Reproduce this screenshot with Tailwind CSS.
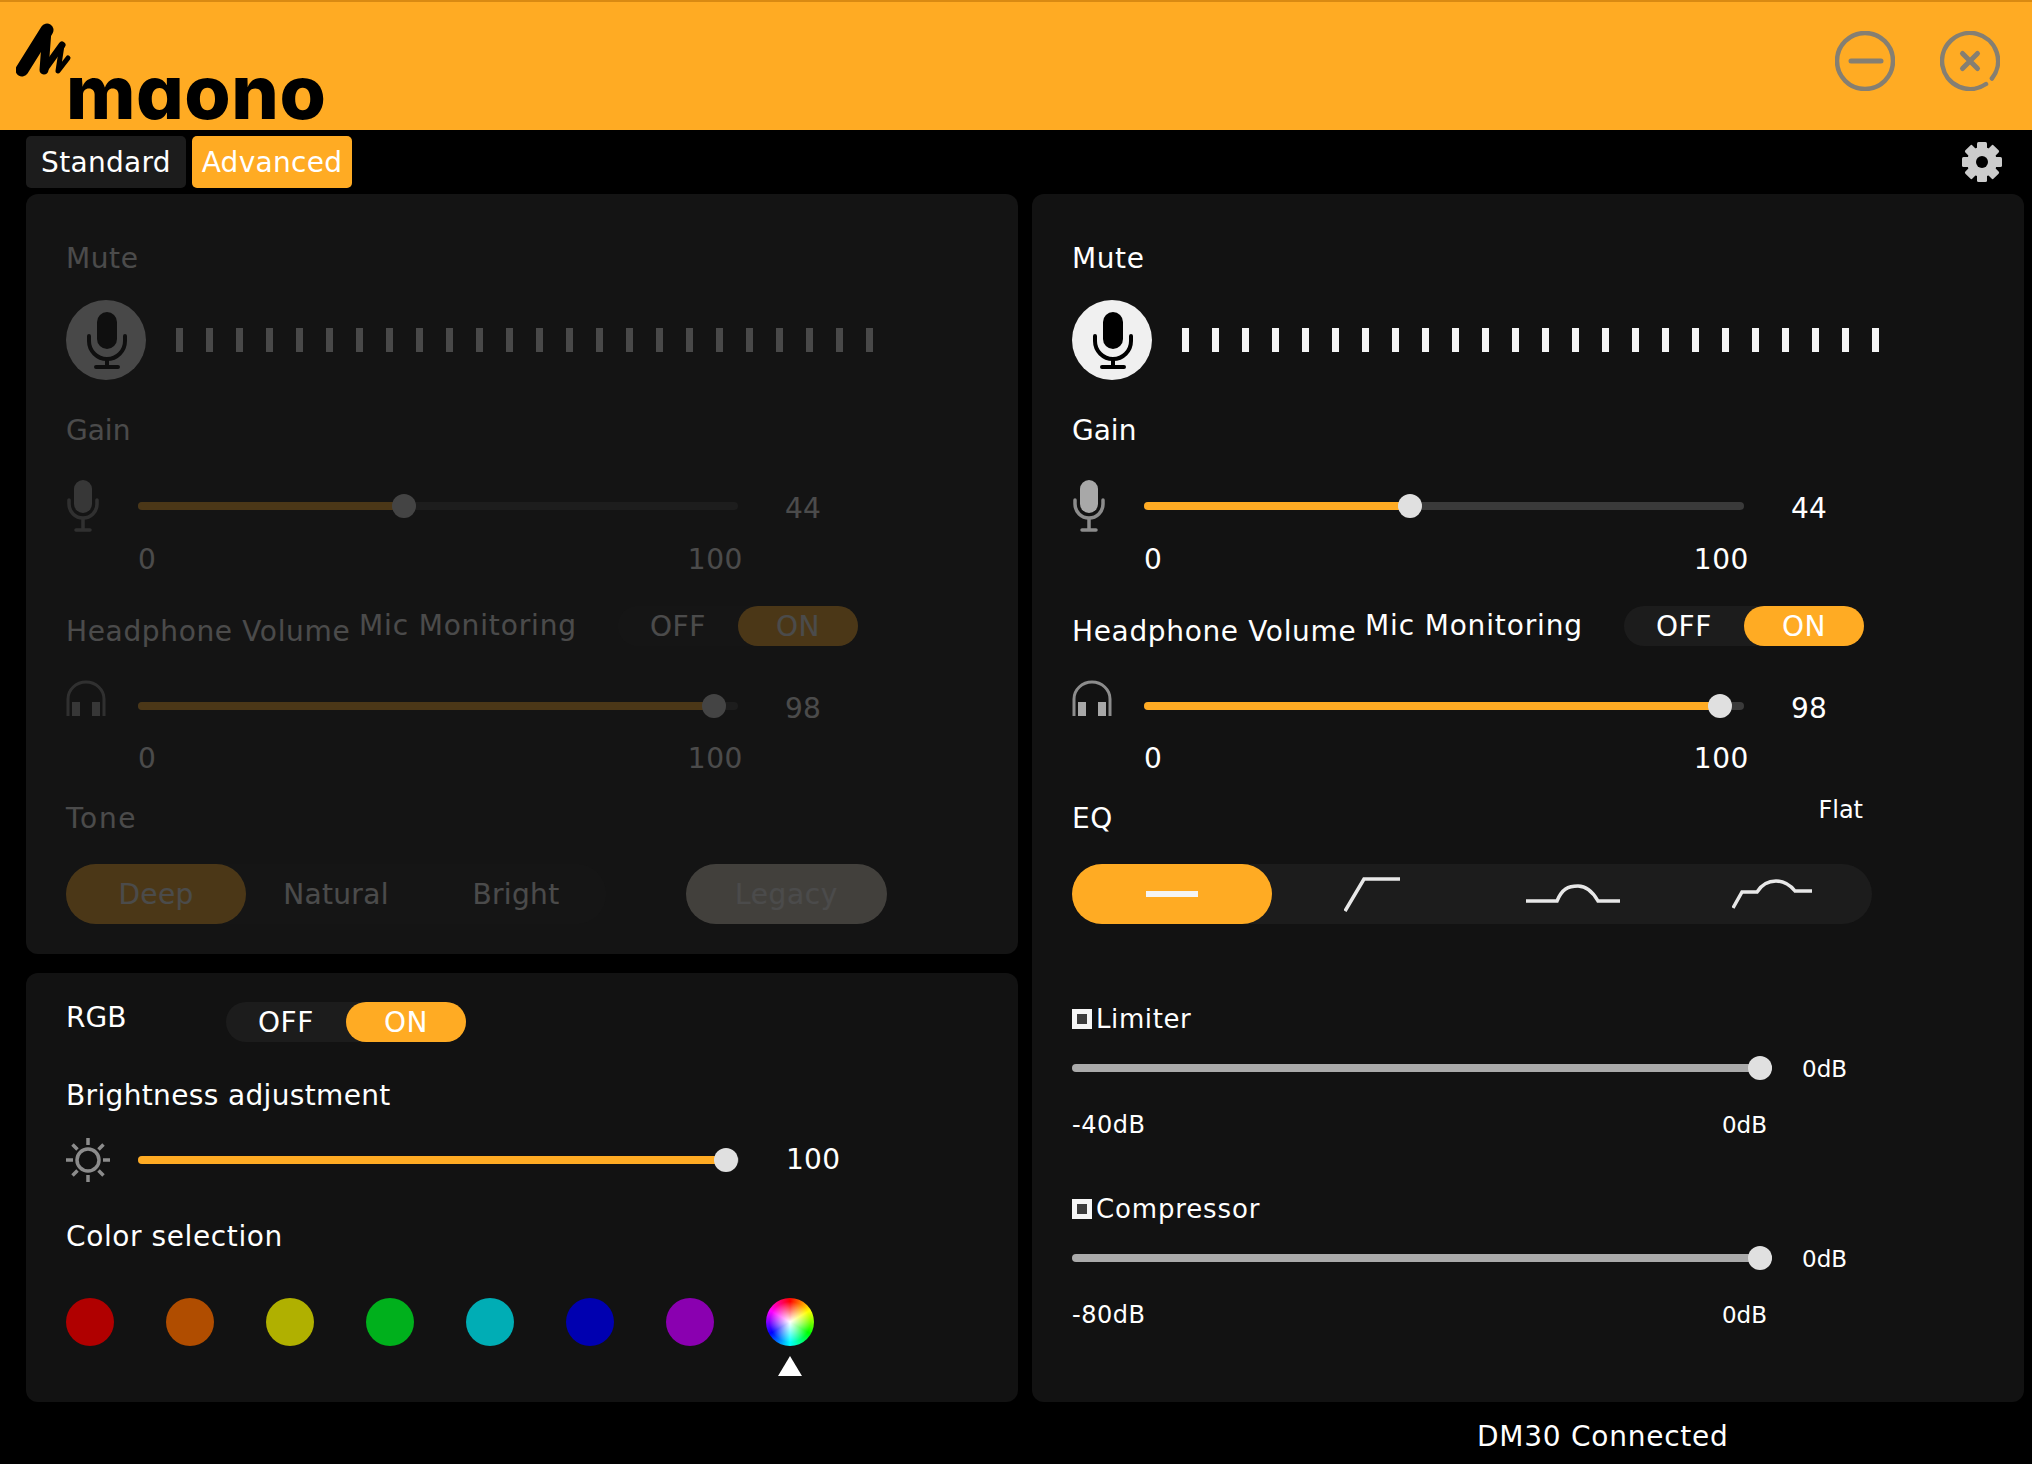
<!DOCTYPE html>
<html lang="en">
<head>
  <meta charset="UTF-8" />
  <script src="https://cdn.jsdelivr.net/npm/@tailwindcss/browser@4"></script>
  <title>Maono Link</title>
</head>
<body class="bg-black font-['DejaVu_Sans',sans-serif] text-white text-[28px] tracking-[0.6px]">
<div class="w-[2032px] h-[1464px] flex flex-col overflow-hidden">

  <!-- Header -->
  <header class="h-[130px] shrink-0 border-t-2 border-[#d98a12] bg-[#ffab23] flex justify-between">
    <div class="flex items-start pl-[16px]">
      <svg class="mt-[20px] w-[56px] h-[58px]" viewBox="0 0 56 58" fill="none" stroke="#000" stroke-linecap="round" stroke-linejoin="round">
        <path d="M6 48 L31 8" stroke-width="13"/>
        <path d="M31 8 L28 48" stroke-width="9"/>
        <path d="M28 48 L46 23" stroke-width="7"/>
        <path d="M46 23 L42 49 L52 36" stroke-width="5"/>
      </svg>
      <div class="font-['Inter',sans-serif] font-extrabold text-[75px] leading-[75px] mt-[52px] -ml-[6px] text-black tracking-[0.5px] [font-feature-settings:'cv11']">maono</div>
    </div>
    <div class="flex gap-[45px] pr-[32px] pt-[29px] items-start">
      <svg class="w-[60px] h-[60px]" viewBox="0 0 60 60" fill="none" stroke="#857f72" stroke-width="4.5" stroke-linecap="round">
        <circle cx="30" cy="30" r="28"/>
        <path d="M16 30 H46" stroke-width="5"/>
      </svg>
      <svg class="w-[60px] h-[60px]" viewBox="0 0 60 60" fill="none" stroke="#857f72" stroke-width="4.5" stroke-linecap="round">
        <path d="M51.9 47.5 A28 28 0 1 0 46 53"/>
        <path d="M22.5 22.5 L37.5 37.5 M37.5 22.5 L22.5 37.5" stroke-width="5"/>
      </svg>
    </div>
  </header>

  <!-- Tabs -->
  <div class="h-[64px] shrink-0 pt-[6px] pl-[26px] pr-[30px] flex items-start gap-[6px] tracking-[0.3px]">
    <div class="w-[160px] h-[52px] pt-[2px] rounded-[5px] bg-[#1c1c1c] flex items-center justify-center">Standard</div>
    <div class="w-[160px] h-[52px] pt-[2px] rounded-[5px] bg-[#ffab23] flex items-center justify-center">Advanced</div>
    <svg class="ml-auto w-[40px] h-[40px] mt-[6px]" viewBox="0 0 40 40" fill="#cccccc">
      <circle cx="20" cy="20" r="15"/>
      <rect x="15" y="0" width="10" height="9" rx="1.5"/>
      <rect x="15" y="0" width="10" height="9" rx="1.5" transform="rotate(45 20 20)"/>
      <rect x="15" y="0" width="10" height="9" rx="1.5" transform="rotate(90 20 20)"/>
      <rect x="15" y="0" width="10" height="9" rx="1.5" transform="rotate(135 20 20)"/>
      <rect x="15" y="0" width="10" height="9" rx="1.5" transform="rotate(180 20 20)"/>
      <rect x="15" y="0" width="10" height="9" rx="1.5" transform="rotate(225 20 20)"/>
      <rect x="15" y="0" width="10" height="9" rx="1.5" transform="rotate(270 20 20)"/>
      <rect x="15" y="0" width="10" height="9" rx="1.5" transform="rotate(315 20 20)"/>
      <circle cx="20" cy="20" r="6" fill="#000"/>
    </svg>
  </div>

  <!-- Panels -->
  <div class="h-[1208px] shrink-0 pl-[26px] flex gap-[14px]">
    <div class="w-[992px] flex flex-col gap-[19px]">

      <!-- Standard controls, disabled -->
      <section class="h-[760px] rounded-[12px] bg-[#141414] pl-[40px] pt-[44px]">
        <div class="opacity-[0.235]">
          <div class="level-controls"></div>
          <div class="h-[40px] leading-[42px] mt-[20px] tracking-[1.7px]">Tone</div>
          <div class="mt-[26px] flex gap-[80px]">
            <div class="w-[540px] h-[60px] pt-[2px] rounded-full bg-[#1c1c1c] flex items-center tracking-[0.35px]">
              <div class="w-[180px] h-[60px] -mt-[2px] pt-[2px] rounded-full bg-[#ffab23] flex items-center justify-center">Deep</div>
              <div class="w-[180px] text-center">Natural</div>
              <div class="w-[180px] text-center">Bright</div>
            </div>
            <div class="w-[201px] h-[60px] pt-[2px] rounded-full bg-[#d8d0c0] flex items-center justify-center">Legacy</div>
          </div>
        </div>
      </section>

      <!-- RGB -->
      <section class="h-[429px] rounded-[12px] bg-[#121212] pl-[40px] pt-[29px]">
        <div class="flex items-start">
          <div class="w-[160px] h-[30px] leading-[32px] tracking-[0px]">RGB</div>
          <div class="w-[240px] h-[40px] pt-[2px] rounded-full bg-[#1c1c1c] flex items-center">
            <div class="w-[120px] text-center">OFF</div>
            <div class="w-[120px] h-[40px] -mt-[2px] pt-[2px] rounded-full bg-[#ffab23] flex items-center justify-center">ON</div>
          </div>
        </div>
        <div class="h-[40px] leading-[42px] mt-[33px] tracking-[0.35px]">Brightness adjustment</div>
        <div class="flex items-center mt-[23px] h-[44px]">
          <svg class="w-[44px] h-[44px]" viewBox="0 0 44 44" fill="none" stroke="#8c8c8c" stroke-width="3.5">
            <circle cx="22" cy="22" r="11"/>
            <path d="M22 0 V7 M22 37 V44 M0 22 H7 M37 22 H44 M6.5 6.5 L11.5 11.5 M32.5 32.5 L37.5 37.5 M37.5 6.5 L32.5 11.5 M11.5 32.5 L6.5 37.5"/>
          </svg>
          <div class="relative ml-[28px] w-[601px] h-[8px] rounded-full bg-[#3a3a3a]">
            <div class="w-[588px] h-[8px] rounded-full bg-[#ffab23]"></div>
            <div class="absolute left-[576px] -top-[8px] w-[24px] h-[24px] rounded-full bg-[#e0e0e0]"></div>
          </div>
          <div class="ml-[47px] tracking-[0.3px]">100</div>
        </div>
        <div class="h-[40px] leading-[40px] mt-[35px]">Color selection</div>
        <div class="flex gap-[52px] mt-[41px]">
          <div class="w-[48px] h-[48px] rounded-full bg-[#b00000]"></div>
          <div class="w-[48px] h-[48px] rounded-full bg-[#b04d00]"></div>
          <div class="w-[48px] h-[48px] rounded-full bg-[#b0b000]"></div>
          <div class="w-[48px] h-[48px] rounded-full bg-[#00b01c]"></div>
          <div class="w-[48px] h-[48px] rounded-full bg-[#00adb5]"></div>
          <div class="w-[48px] h-[48px] rounded-full bg-[#0000b0]"></div>
          <div class="w-[48px] h-[48px] rounded-full bg-[#8a00b0]"></div>
          <div class="flex flex-col items-center">
            <div class="relative w-[48px] h-[48px] rounded-full bg-[conic-gradient(#ff0000,#ffff00_60deg,#00ff00_120deg,#00ffff_180deg,#0000ff_240deg,#ff00ff_300deg,#ff0000)]">
              <div class="absolute inset-0 rounded-full bg-[radial-gradient(circle,#ffffff,transparent_60%)]"></div>
            </div>
            <svg class="mt-[10px] w-[24px] h-[20px]" viewBox="0 0 24 20" fill="#ffffff"><path d="M12 0 L24 20 H0 Z"/></svg>
          </div>
        </div>
      </section>
    </div>

    <!-- Advanced controls -->
    <section class="w-[992px] rounded-[12px] bg-[#121212] pl-[40px] pt-[44px]">
      <div class="level-controls"></div>
      <div class="mt-[20px] w-[791px] flex justify-between items-start">
        <div class="h-[40px] leading-[42px]">EQ</div>
        <div class="text-[24px] leading-[24px] tracking-[0px]">Flat</div>
      </div>
      <div class="mt-[26px] w-[800px] h-[60px] rounded-full bg-[#1c1c1c] flex items-center">
        <div class="w-[200px] h-[60px] rounded-full bg-[#ffab23] flex items-center justify-center">
          <div class="w-[52px] h-[6px] bg-[#f5f5f5]"></div>
        </div>
        <div class="w-[200px] flex justify-center">
          <svg class="w-[56px] h-[36px]" viewBox="0 0 56 36" fill="none" stroke="#e8e8e8" stroke-width="3.5"><path d="M1 35 L20 3 H56"/></svg>
        </div>
        <div class="w-[200px] flex justify-center">
          <svg class="w-[94px] h-[20px] ml-[1px]" viewBox="0 0 94 20" fill="none" stroke="#e8e8e8" stroke-width="3.5"><path d="M0 17 H31 C36 5 42 2 52 2 C62 2 68 10 72 17 H94"/></svg>
        </div>
        <div class="w-[200px] flex justify-center">
          <svg class="w-[80px] h-[30px]" viewBox="0 0 80 30" fill="none" stroke="#e8e8e8" stroke-width="3.5"><path d="M1 29 L10 13 H25 C30 5 36 2 44 2 C52 2 58 6 63 12 H80"/></svg>
        </div>
      </div>

      <div class="mt-[75px] h-[40px] flex items-center text-[26px]">
        <div class="w-[20px] h-[20px] border-[5px] border-[#f5f5f5] bg-[#3c3c3c] mr-[4px]"></div>
        <span>Limiter</span>
      </div>
      <div class="mt-[17px] flex items-center h-[24px] text-[23px] tracking-[0px]">
        <div class="relative w-[700px] h-[8px] rounded-full bg-[#aaaaaa]">
          <div class="absolute left-[676px] -top-[8px] w-[24px] h-[24px] rounded-full bg-[#e0e0e0]"></div>
        </div>
        <div class="ml-[30px] pt-[2px]">0dB</div>
      </div>
      <div class="mt-[30px] w-[695px] h-[30px] flex justify-between items-center text-[24px] tracking-[0.5px]"><span>-40dB</span><span class="text-[23px] tracking-[0px]">0dB</span></div>

      <div class="mt-[49px] h-[40px] flex items-center text-[26px]">
        <div class="w-[20px] h-[20px] border-[5px] border-[#f5f5f5] bg-[#3c3c3c] mr-[4px]"></div>
        <span class="tracking-[0.85px]">Compressor</span>
      </div>
      <div class="mt-[17px] flex items-center h-[24px] text-[23px] tracking-[0px]">
        <div class="relative w-[700px] h-[8px] rounded-full bg-[#aaaaaa]">
          <div class="absolute left-[676px] -top-[8px] w-[24px] h-[24px] rounded-full bg-[#e0e0e0]"></div>
        </div>
        <div class="ml-[30px] pt-[2px]">0dB</div>
      </div>
      <div class="mt-[29px] w-[695px] h-[30px] pt-[2px] flex justify-between items-center text-[24px] tracking-[0.5px]"><span>-80dB</span><span class="text-[23px] tracking-[0px]">0dB</span></div>
    </section>
  </div>

  <div class="h-[62px] pt-[8px] flex items-center pl-[1477px] tracking-[0.75px]">DM30 Connected</div>
</div>

<script>
  // mute / gain / headphone block is the same on both sides
  let ticks = '';
  for (let i = 0; i < 24; i++) {
    ticks += '<div class="w-[7px] h-[24px] bg-[#f5f5f5]"></div>';
  }

  const levelControls = `
    <div class="h-[40px] leading-[42px]">Mute</div>
    <div class="mt-[22px] flex items-center">
      <div class="w-[80px] h-[80px] rounded-full bg-[#f0f0f0]">
        <svg class="w-[80px] h-[80px]" viewBox="0 0 80 80" fill="none" stroke="#000" stroke-width="4" stroke-linecap="round">
          <rect x="31" y="12" width="20" height="37" rx="10" fill="#000" stroke="none"/>
          <path d="M23 36 V41 A18 18 0 0 0 59 41 V36"/>
          <path d="M41 59 V66 M30 67 H52"/>
        </svg>
      </div>
      <div class="ml-[30px] flex gap-[23px]">${ticks}</div>
    </div>
    <div class="mt-[30px] h-[40px] leading-[42px] tracking-[0px]">Gain</div>
    <div class="mt-[30px] h-[52px] flex items-center">
      <svg class="w-[32px] h-[52px] ml-[1px]" viewBox="0 0 32 52" fill="none" stroke="#8c8c8c" stroke-width="3.5" stroke-linecap="round">
        <rect x="7" y="0" width="18" height="33" rx="9" fill="#a8a8a8" stroke="none"/>
        <path d="M2 20 V24 A14 14 0 0 0 30 24 V20"/>
        <path d="M16 39 V49 M9 50 H23"/>
      </svg>
      <div class="relative ml-[39px] w-[600px] h-[8px] rounded-full bg-[#3a3a3a]">
        <div class="w-[266px] h-[8px] rounded-full bg-[#ffab23]"></div>
        <div class="absolute left-[254px] -top-[8px] w-[24px] h-[24px] rounded-full bg-[#e0e0e0]"></div>
      </div>
      <div class="ml-[47px] mt-[6px] tracking-[0.3px]">44</div>
    </div>
    <div class="mt-[7px] ml-[72px] w-[605px] h-[40px] pt-[2px] flex justify-between items-center"><span>0</span><span>100</span></div>
    <div class="mt-[27px] h-[40px] flex items-start">
      <div class="w-[294px] h-[40px] leading-[40px] mt-[6px] tracking-[0.65px]">Headphone Volume</div>
      <div class="w-[258px] h-[40px] leading-[40px] tracking-[0.85px] -ml-[1px] mr-[1px]">Mic Monitoring</div>
      <div class="w-[240px] h-[40px] pt-[2px] rounded-full bg-[#1c1c1c] flex items-center">
        <div class="w-[120px] text-center">OFF</div>
        <div class="w-[120px] h-[40px] -mt-[2px] pt-[2px] rounded-full bg-[#ffab23] flex items-center justify-center">ON</div>
      </div>
    </div>
    <div class="mt-[34px] h-[52px] flex items-center">
      <svg class="w-[40px] h-[36px] self-start" viewBox="0 0 40 36" fill="none">
        <path d="M2 36 V19 A18 17 0 0 1 38 19 V36" stroke="#8c8c8c" stroke-width="3"/>
        <rect x="6" y="22" width="8" height="14" fill="#a8a8a8"/>
        <rect x="26" y="22" width="8" height="14" fill="#a8a8a8"/>
      </svg>
      <div class="relative ml-[32px] w-[600px] h-[8px] rounded-full bg-[#3a3a3a]">
        <div class="w-[576px] h-[8px] rounded-full bg-[#ffab23]"></div>
        <div class="absolute left-[564px] -top-[8px] w-[24px] h-[24px] rounded-full bg-[#e0e0e0]"></div>
      </div>
      <div class="ml-[47px] mt-[6px] tracking-[0.3px]">98</div>
    </div>
    <div class="mt-[6px] ml-[72px] w-[605px] h-[40px] pt-[2px] flex justify-between items-center"><span>0</span><span>100</span></div>
  `;

  document.querySelectorAll('.level-controls').forEach((el) => {
    el.innerHTML = levelControls;
  });
</script>
</body>
</html>
